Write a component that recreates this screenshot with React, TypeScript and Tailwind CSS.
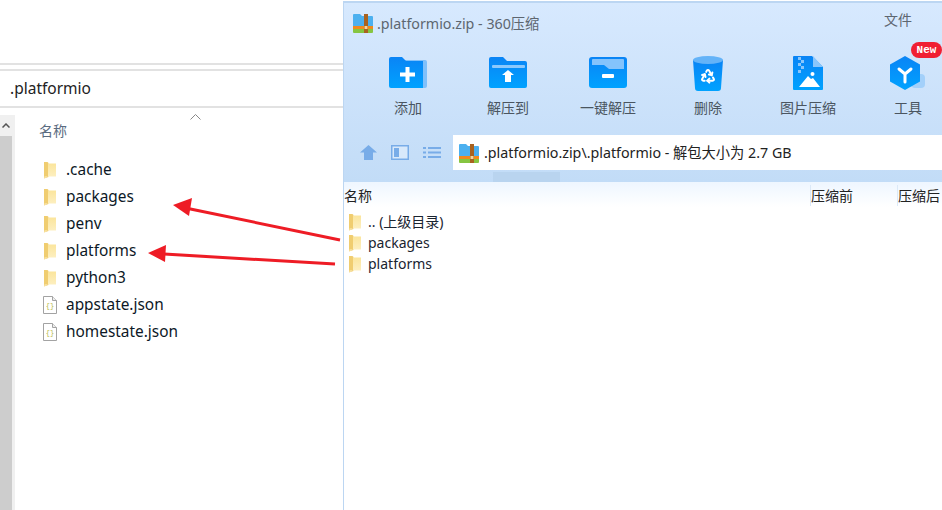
import type { ReactNode } from "react";
import { Recycle } from "lucide-react";

const latin = "font-['Noto_Sans','Noto_Sans_CJK_SC',sans-serif]";

function Folder({ className = "" }: { className?: string }) {
  return (
    <svg width="14" height="18" viewBox="0 0 14 18" className={className}>
      <defs>
        <linearGradient id="fld" x1="0" y1="0" x2="0" y2="1">
          <stop offset="0" stopColor="#fbe59c" />
          <stop offset="1" stopColor="#fdf0c4" />
        </linearGradient>
      </defs>
      <path d="M1 1h3.500l1 1V16l-4.500 1.500z" fill="#f0cd70" />
      <path d="M5 2.500h8V15.500H1.500V17l3.500-1.500z" fill="url(#fld)" />
    </svg>
  );
}

function JsonFile() {
  return (
    <svg width="14" height="18" viewBox="0 0 14 18">
      <path d="M.5.500h9l4 4v13H.500z" fill="#fff" stroke="#a3a3a3" />
      <path d="M9.500.500v4h4" fill="#eee" stroke="#a3a3a3" />
      <text x="7" y="12" textAnchor="middle" fontSize="7" fill="#b5b84a" fontFamily="Liberation Mono">
        {"{}"}
      </text>
    </svg>
  );
}

function ZipIcon({ size }: { size: number }) {
  return (
    <svg width={size} height={size} viewBox="0 0 20 20">
      <path d="M0 2a1 1 0 0 1 1-1h6l2 2h10a1 1 0 0 1 1 1v10H0z" fill="#4cb0ef" />
      <rect y="13" width="20" height="3" fill="#f08a1d" />
      <path d="M0 16h20v3a1 1 0 0 1-1 1H1a1 1 0 0 1-1-1z" fill="#86c541" />
      <rect x="11" y="1" width="4" height="19" fill="#a9621f" />
      <rect x="11.500" y="13" width="3" height="3" fill="#f6d79a" />
    </svg>
  );
}

function AddIcon() {
  return (
    <svg width="40" height="34" viewBox="0 0 40 34">
      <defs>
        <linearGradient id="blue" x1="0" y1="0" x2="0" y2="1">
          <stop offset="0" stopColor="#0a84f5" />
          <stop offset="1" stopColor="#00a2ff" />
        </linearGradient>
      </defs>
      <path d="M14 4h23a2 2 0 0 1 2 2v24a2 2 0 0 1-2 2h-3z" fill="#7fc0fb" />
      <path d="M1 3a2 2 0 0 1 2-2h11l4 4h17v27H3a2 2 0 0 1-2-2z" fill="url(#blue)" />
      <path d="M12 16.500h5.500V11h4v5.500H27v4h-5.500V26h-4v-5.500H12z" fill="#fff" />
    </svg>
  );
}

function ExtractIcon() {
  return (
    <svg width="40" height="34" viewBox="0 0 40 34">
      <path d="M1 3a2 2 0 0 1 2-2h12l4 4h18a2 2 0 0 1 2 2v23a2 2 0 0 1-2 2H3a2 2 0 0 1-2-2z" fill="url(#blue)" />
      <rect x="4" y="9" width="33" height="3" rx="1" fill="#8cc8fc" />
      <path d="M14 19l6-5 6 5h-3v7h-6v-7z" fill="#fff" />
    </svg>
  );
}

function OneKeyIcon() {
  return (
    <svg width="40" height="34" viewBox="0 0 40 34">
      <rect x="1" y="1" width="38" height="31" rx="3" fill="url(#blue)" />
      <path d="M4 4a1 1 0 0 1 1-1h30a1 1 0 0 1 1 1v9H21l-5-4H4z" fill="#84c3fc" />
      <rect x="14" y="18" width="12" height="4" rx="1" fill="#fff" />
    </svg>
  );
}

function BinIcon() {
  return (
    <svg width="40" height="38" viewBox="0 0 40 38">
      <path d="M5 6h30l-2 28a3 3 0 0 1-3 3H10a3 3 0 0 1-3-3z" fill="url(#blue)" />
      <ellipse cx="20" cy="6" rx="15" ry="4" fill="#64b3f8" />
      <Recycle x="12" y="14" width="16" height="16" color="#fff" strokeWidth={3} />
    </svg>
  );
}

function ImageZipIcon() {
  return (
    <svg width="32" height="36" viewBox="0 0 32 36">
      <path d="M2 1h18l11 11v22a1 1 0 0 1-1 1H2a1 1 0 0 1-1-1V2a1 1 0 0 1 1-1z" fill="url(#blue)" />
      <path d="M21 1l10 11H21z" fill="#8ac6fb" />
      <path d="M6 2h3v3H6zM9 5h3v3H9zM6 8h3v3H6zM9 11h3v3H9zM6 15h3v3H6z" fill="#8ac6fb" />
      <circle cx="20.500" cy="19" r="2" fill="#fff" />
      <path d="M7 32l9-11 3 3 2-1 7 9z" fill="#fff" />
    </svg>
  );
}

function ToolIcon() {
  return (
    <svg width="38" height="36" viewBox="0 0 38 36">
      <rect x="22" y="19" width="14" height="14" rx="4" fill="#a3d0fa" />
      <path d="M16 1l15 8.500v17L16 35 1 26.500v-17z" fill="url(#blue)" />
      <path d="M16 19v8M16 19l-6-5M16 19l6-5" stroke="#fff" strokeWidth="3" strokeLinecap="round" fill="none" />
    </svg>
  );
}

function ToolButton({ icon, label, badge }: { icon: ReactNode; label: string; badge?: boolean }) {
  return (
    <div className="relative flex w-[100px] shrink-0 flex-col items-center">
      <div className="flex h-[44px] items-center justify-center">{icon}</div>
      <span className="mt-[3px] text-[14px] leading-5 text-[#4a5560]">{label}</span>
      {badge && (
        <span className="absolute left-[53px] top-[-9px] flex h-[16px] w-[31px] items-center justify-center rounded-full bg-[#f01f33] font-['Liberation_Mono',monospace] text-[11px] font-bold text-white">
          New
        </span>
      )}
    </div>
  );
}

function LeftRow({ name, file }: { name: string; file?: boolean }) {
  return (
    <div className="flex h-[27px] items-center">
      {file ? <JsonFile /> : <Folder />}
      <span className="ml-[9px] text-[15.4px] text-[#0c1826]">{name}</span>
    </div>
  );
}

function RightRow({ name }: { name: string }) {
  return (
    <div className="flex h-[21px] items-center">
      <Folder />
      <span className="ml-[6px] text-[14px] text-[#1a2430]">{name}</span>
    </div>
  );
}

export default function App() {
  return (
    <div className={`relative flex h-[510px] w-[942px] overflow-hidden bg-white ${latin}`}>
      {/* explorer window behind */}
      <div className="flex w-[343px] shrink-0 flex-col pt-[63px]">
        <div className="h-[2px] bg-[#e2e2e2]" />
        <div className="mt-[4px] flex h-[39px] items-center border-y-2 border-[#e2e2e2] pl-[10px] text-[15.5px] text-[#222]">
          .platformio
        </div>
        <div className="mt-[7px] flex flex-1">
          <div className="flex w-[12px] flex-col bg-[#cdcdcd]">
            <div className="flex h-[21px] items-center justify-center bg-[#f0f0f0]">
              <svg width="8" height="5" viewBox="0 0 8 5">
                <path d="M.5 4.500L4 1l3.500 3.500" fill="none" stroke="#555" strokeWidth="1.500" />
              </svg>
            </div>
          </div>
          <div className="w-[3px] bg-[#f0f0f0]" />
          <div className="relative flex-1 pl-[24px]">
            <svg width="11" height="6" viewBox="0 0 11 6" className="absolute left-[175px] top-[-1px]">
              <path d="M.5 5.500L5.500.500l5 5" fill="none" stroke="#888" />
            </svg>
            <div className="pt-[6px] text-[14px] leading-5 text-[#5a6b80]">名称</div>
            <div className="mt-[15px] pl-[4px]">
              <LeftRow name=".cache" />
              <LeftRow name="packages" />
              <LeftRow name="penv" />
              <LeftRow name="platforms" />
              <LeftRow name="python3" />
              <LeftRow name="appstate.json" file />
              <LeftRow name="homestate.json" file />
            </div>
          </div>
        </div>
      </div>

      {/* 360 zip window */}
      <div className="mt-[1px] flex min-w-0 flex-1 flex-col overflow-hidden border-l border-t-2 border-[#bcd6f2] bg-white">
        <div className="bg-gradient-to-b from-[#d7e9fe] to-[#c2dcf7]">
          <div className="flex h-[40px] items-center pl-[9px]">
            <ZipIcon size={20} />
            <span className="ml-[4px] mt-[2px] text-[14.25px] text-[#5d6670]">.platformio.zip - 360压缩</span>
            <span className="ml-auto mr-[30px] mt-[-7px] text-[14px] text-[#5d6670]">文件</span>
          </div>
          <div className="flex h-[92px] pl-[14px] pt-[8px]">
            <ToolButton icon={<AddIcon />} label="添加" />
            <ToolButton icon={<ExtractIcon />} label="解压到" />
            <ToolButton icon={<OneKeyIcon />} label="一键解压" />
            <ToolButton icon={<BinIcon />} label="删除" />
            <ToolButton icon={<ImageZipIcon />} label="图片压缩" />
            <ToolButton icon={<ToolIcon />} label="工具" badge />
          </div>
          <div className="flex h-[35px] items-center">
            <div className="flex w-[109px] items-center gap-[14px] pl-[16px]">
              <svg width="17" height="15" viewBox="0 0 17 15">
                <path d="M8.500 0L17 7.500h-4V15H4V7.500H0z" fill="#78ace8" />
              </svg>
              <svg width="18" height="15" viewBox="0 0 18 15">
                <rect x=".75" y=".75" width="16.500" height="13.500" fill="#d8e9fb" stroke="#78ace8" strokeWidth="1.500" />
                <rect x="3" y="3" width="5" height="9" fill="#78ace8" />
              </svg>
              <svg width="18" height="13" viewBox="0 0 18 13">
                <path d="M0 1h3v2H0zM5 1h13v2H5zM0 5.500h3v2H0zM5 5.500h13v2H5zM0 10h3v2H0zM5 10h13v2H5z" fill="#78ace8" />
              </svg>
            </div>
            <div className="flex h-[35px] flex-1 items-center bg-white pl-[6px]">
              <ZipIcon size={20} />
              <span className="ml-[5px] whitespace-nowrap text-[14.25px] text-[#222]">.platformio.zip\.platformio - 解包大小为 2.7 GB</span>
            </div>
          </div>
          <div className="flex h-[12px] pl-[149px]">
            <div className="mt-[2px] w-[67px] bg-[#b9d4ef]" />
          </div>
        </div>

        <div className="flex h-[25px] items-center bg-gradient-to-b from-[#eef6ff] to-white pt-[2px] text-[14px] text-[#222]">
          <span className="w-[466px]">名称</span>
          <span className="w-[87px] border-l border-[#dbe9f8]">压缩前</span>
          <span className="border-l border-[#dbe9f8]">压缩后</span>
        </div>
        <div className="mt-[4px] pl-[4px]">
          <RightRow name=".. (上级目录)" />
          <RightRow name="packages" />
          <RightRow name="platforms" />
        </div>
      </div>

      {/* annotation arrows */}
      <svg width="942" height="510" viewBox="0 0 942 510" className="pointer-events-none absolute left-0 top-0">
        <path d="M340 240L188 208.500" stroke="#ee1c25" strokeWidth="3" />
        <path d="M173 205L192 198L189 216z" fill="#ee1c25" />
        <path d="M335 264L164 254" stroke="#ee1c25" strokeWidth="3" />
        <path d="M148 253L166 245L165 262z" fill="#ee1c25" />
      </svg>
    </div>
  );
}
